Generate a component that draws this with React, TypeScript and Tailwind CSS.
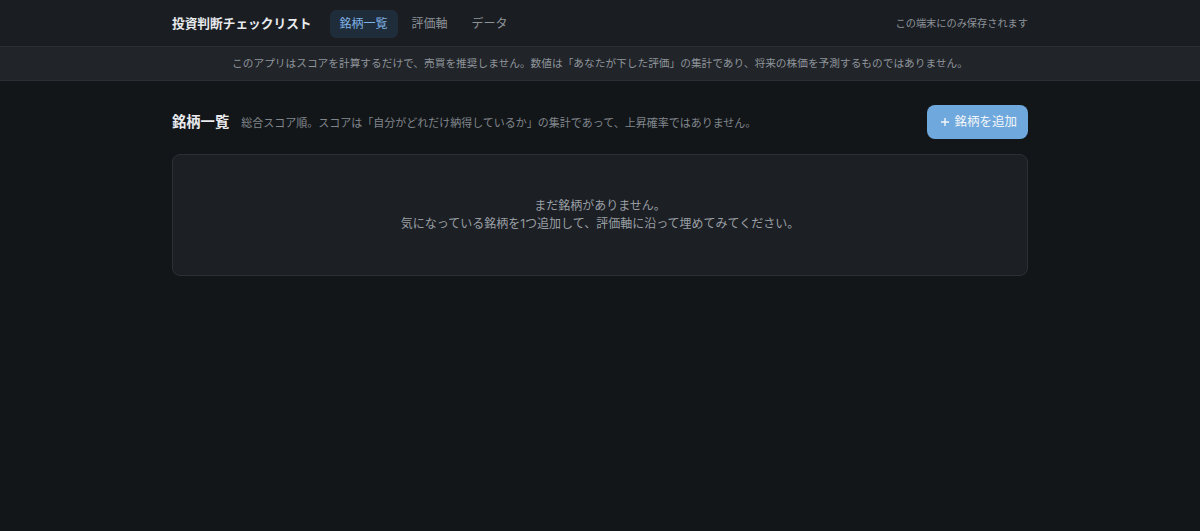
import React from "react";

export default function App() {
  return (
    <div
      className="min-h-[531px] w-full bg-[#131619] text-[#c9ccd0]"
      style={{ fontFamily: 'Inter, "Noto Sans CJK JP", sans-serif' }}
    >
      <header className="border-b border-[#2a2e35] bg-[#1a1d22]">
        <div className="mx-auto flex h-[46px] max-w-[896px] items-center px-5 pt-px">
          <div className="text-[12.7px] font-bold text-[#e8eaed]">投資判断チェックリスト</div>
          <nav className="ml-[18px] flex items-center gap-1">
            <button className="h-7 rounded-md bg-[#1f2c3a] px-[10px] text-[12px] text-[#7fb2e5]">銘柄一覧</button>
            <button className="h-7 rounded-md px-[10px] text-[12px] text-[#8d9399]">評価軸</button>
            <button className="h-7 rounded-md px-[10px] text-[12px] text-[#8d9399]">データ</button>
          </nav>
          <div className="ml-auto text-[10.2px] text-[#8d9399]">この端末にのみ保存されます</div>
        </div>
      </header>
      <div className="border-b border-[#2a2e35] bg-[#212429] py-[9px] text-center text-[10.7px] leading-[15px] text-[#8f959b]">
        このアプリはスコアを計算するだけで、売買を推奨しません。数値は「あなたが下した評価」の集計であり、将来の株価を予測するものではありません。
      </div>
      <main className="mx-auto max-w-[896px] px-5 pt-6">
        <div className="flex items-center justify-between">
          <div className="flex items-baseline gap-3">
            <h1 className="text-[14.3px] font-bold text-[#e8eaed]">銘柄一覧</h1>
            <p className="text-[11px] text-[#80868c]">総合スコア順。スコアは「自分がどれだけ納得しているか」の集計であって、上昇確率ではありません。</p>
          </div>
          <button className="flex h-[34px] items-center gap-[5px] rounded-lg bg-[#6fa8dc] pl-[14px] pr-[11px] text-[12.5px] text-[#f2f6fa]">
            <svg width="8" height="8" viewBox="0 0 8 8" fill="none" stroke="#f2f6fa" strokeWidth="1.4">
              <path d="M4 0v8M0 4h8" />
            </svg>
            <span>銘柄を追加</span>
          </button>
        </div>
        <div className="mt-[15px] rounded-lg border border-[#2c3036] bg-[#1c1f24] py-[42px] text-center text-[12px] leading-[18px] text-[#9a9fa5]">
          <p>まだ銘柄がありません。</p>
          <p>気になっている銘柄を1つ追加して、評価軸に沿って埋めてみてください。</p>
        </div>
      </main>
    </div>
  );
}
